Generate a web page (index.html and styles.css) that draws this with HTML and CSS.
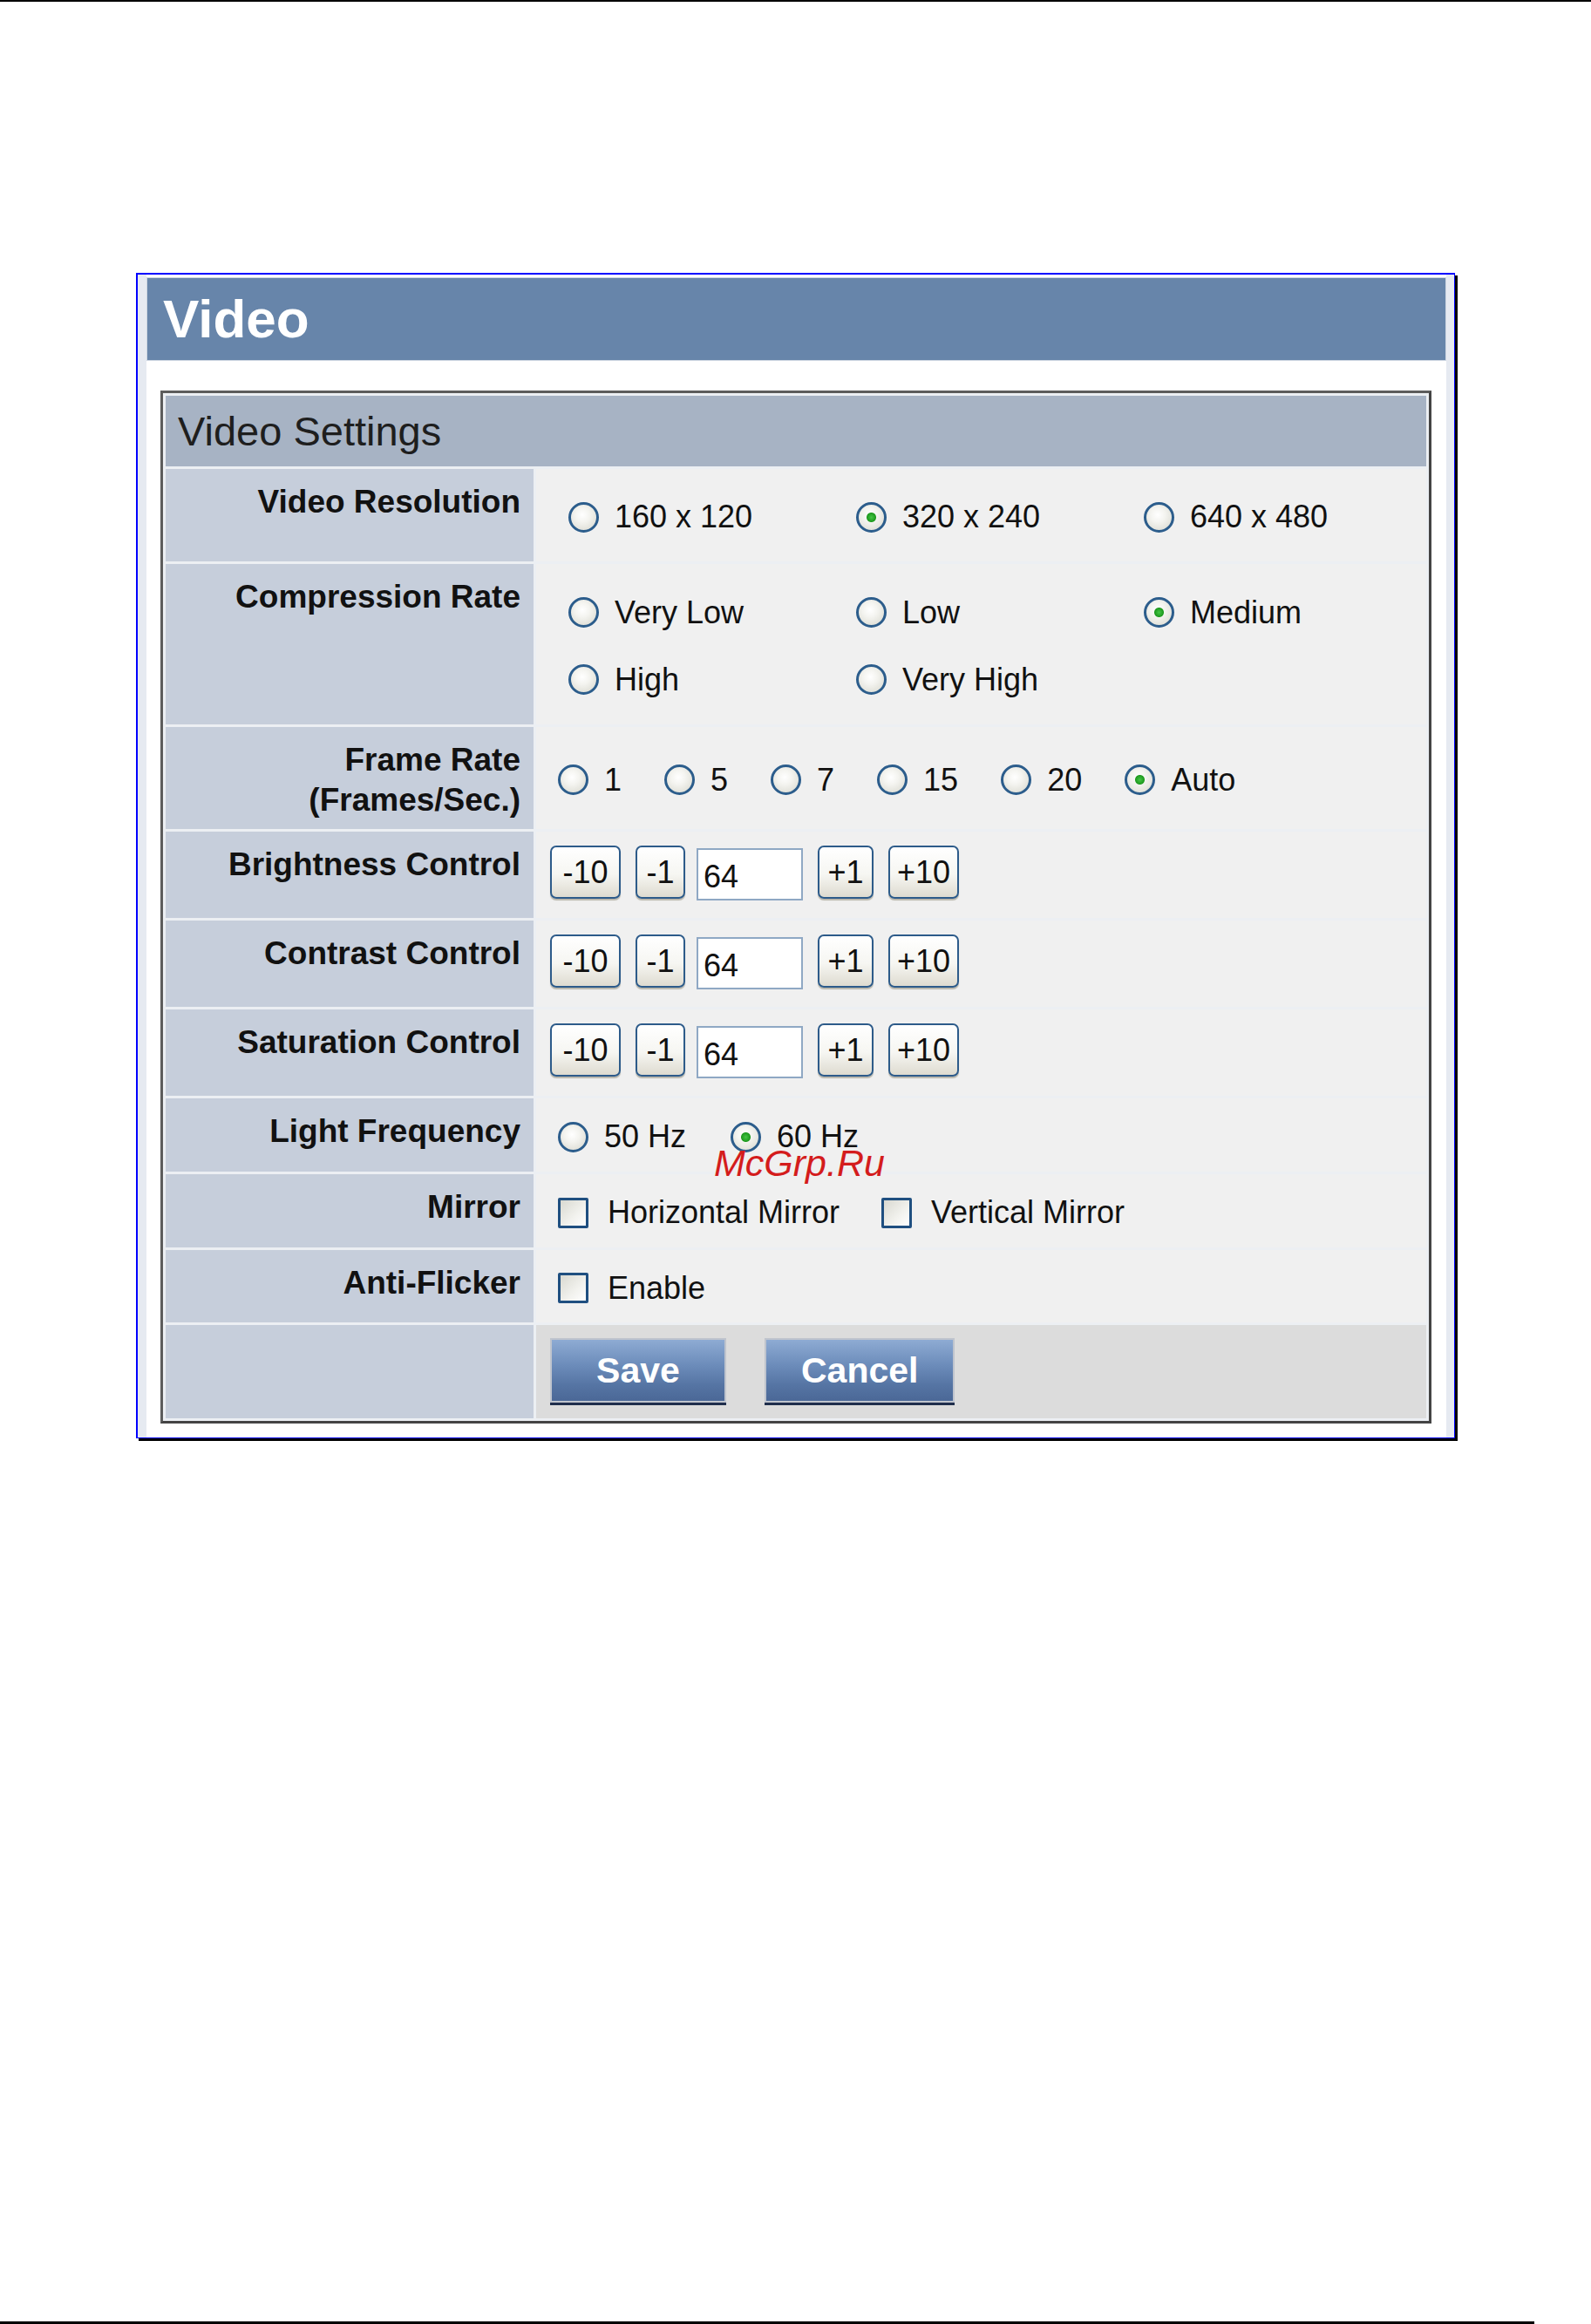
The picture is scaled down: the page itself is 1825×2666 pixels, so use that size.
FILE: index.html
```html
<!DOCTYPE html>
<html>
<head>
  <title>Video</title>
  <link rel="stylesheet" href="styles.css">
</head>
<body>
<div class="topline"></div>

<div class="panel">
  <h1 class="title">Video</h1>

  <table class="settings">
    <colgroup>
      <col class="c-lbl">
      <col class="c-val">
    </colgroup>
    <tr class="r-head">
      <td colspan="2" class="sec">Video Settings</td>
    </tr>
    <tr class="r-res">
      <td class="lbl">Video Resolution</td>
      <td class="val">
        <div class="cols">
          <label class="opt"><input type="radio" name="res"> 160 x 120</label>
          <label class="opt"><input type="radio" name="res" checked> 320 x 240</label>
          <label class="opt"><input type="radio" name="res"> 640 x 480</label>
        </div>
      </td>
    </tr>
    <tr class="r-comp">
      <td class="lbl">Compression Rate</td>
      <td class="val">
        <div class="cols">
          <label class="opt"><input type="radio" name="comp"> Very Low</label>
          <label class="opt"><input type="radio" name="comp"> Low</label>
          <label class="opt"><input type="radio" name="comp" checked> Medium</label>
          <label class="opt"><input type="radio" name="comp"> High</label>
          <label class="opt"><input type="radio" name="comp"> Very High</label>
        </div>
      </td>
    </tr>
    <tr class="r-fps">
      <td class="lbl">Frame Rate<br>(Frames/Sec.)</td>
      <td class="val">
        <div class="line">
          <label class="opt fps"><input type="radio" name="fps"> 1</label>
          <label class="opt fps"><input type="radio" name="fps"> 5</label>
          <label class="opt fps"><input type="radio" name="fps"> 7</label>
          <label class="opt fps"><input type="radio" name="fps"> 15</label>
          <label class="opt fps"><input type="radio" name="fps"> 20</label>
          <label class="opt fps"><input type="radio" name="fps" checked> Auto</label>
        </div>
      </td>
    </tr>
    <tr class="r-ctl">
      <td class="lbl">Brightness Control</td>
      <td class="val ctl">
        <div class="stepper">
          <button class="step s10">-10</button>
          <button class="step s1">-1</button>
          <input class="num" type="text" value="64">
          <button class="step s1p">+1</button>
          <button class="step s10">+10</button>
        </div>
      </td>
    </tr>
    <tr class="r-ctl">
      <td class="lbl">Contrast Control</td>
      <td class="val ctl">
        <div class="stepper">
          <button class="step s10">-10</button>
          <button class="step s1">-1</button>
          <input class="num" type="text" value="64">
          <button class="step s1p">+1</button>
          <button class="step s10">+10</button>
        </div>
      </td>
    </tr>
    <tr class="r-ctl">
      <td class="lbl">Saturation Control</td>
      <td class="val ctl">
        <div class="stepper">
          <button class="step s10">-10</button>
          <button class="step s1">-1</button>
          <input class="num" type="text" value="64">
          <button class="step s1p">+1</button>
          <button class="step s10">+10</button>
        </div>
      </td>
    </tr>
    <tr class="r-sm">
      <td class="lbl">Light Frequency</td>
      <td class="val">
        <div class="line">
          <label class="opt hz"><input type="radio" name="hz"> 50 Hz</label>
          <label class="opt hz"><input type="radio" name="hz" checked> 60 Hz</label>
        </div>
      </td>
    </tr>
    <tr class="r-sm">
      <td class="lbl">Mirror</td>
      <td class="val">
        <div class="line">
          <label class="opt box"><input type="checkbox"> Horizontal Mirror</label>
          <label class="opt box"><input type="checkbox"> Vertical Mirror</label>
        </div>
      </td>
    </tr>
    <tr class="r-sm2">
      <td class="lbl">Anti-Flicker</td>
      <td class="val">
        <div class="line">
          <label class="opt box"><input type="checkbox"> Enable</label>
        </div>
      </td>
    </tr>
    <tr class="r-btn">
      <td class="lbl"></td>
      <td class="val actions">
        <button class="big">Save</button>
        <button class="big cancel">Cancel</button>
      </td>
    </tr>
  </table>
</div>

<div class="mark">McGrp.Ru</div>

<div class="bottomline"></div>
</body>
</html>
```

FILE: styles.css
```css
body {
  margin: 0;
  height: 2666px;
  display: flex;
  flex-direction: column;
  position: relative;
  font-family: "Liberation Sans", Arial, sans-serif;
  color: #111;
  background: #fff;
}
.topline {
  height: 2px;
  background: #000;
}
.bottomline {
  margin-top: auto;
  height: 3px;
  width: 1760px;
  background: #000;
}

/* outer frame */
.panel {
  margin: 311px 0 0 156px;
  width: 1491px;
  padding: 3px 9px 16px 10px;
  border: 1px solid #0000ff;
  border-top-width: 2px;
  border-left-width: 2px;
  box-shadow: 3px 3px 0 #000;
  background: linear-gradient(to right, #e6eaf1 0, #e6eaf1 10px, #fff 10px, #fff calc(100% - 9px), #e6eaf1 calc(100% - 9px));
}
.title {
  margin: 0;
  height: 96px;
  box-sizing: border-box;
  padding-left: 18px;
  line-height: 94px;
  font-size: 62px;
  font-weight: bold;
  color: #fff;
  background: #6785aa;
  border: 1px solid #cfd7e2;
}

/* settings table */
.settings {
  margin: 34px 0 0 16px;
  width: 1458px;
  table-layout: fixed;
  border-collapse: separate;
  border-spacing: 3px;
  border: 3px solid #5c5c5c;
  border-right-color: #444;
  border-bottom-color: #444;
  background: #eceff3;
}
.c-lbl { width: 422px; }
.c-val { width: 1021px; }
.settings td {
  padding: 0;
}
.sec {
  background: #a7b3c4;
  font-size: 47px;
  color: #1e1e1e;
  padding-left: 14px !important;
  vertical-align: middle;
}
.lbl {
  background: #c6cedb;
  text-align: right;
  vertical-align: top;
  padding: 15px 15px 0 0 !important;
  font-weight: bold;
  font-size: 37px;
  line-height: 46px;
  color: #111;
}
.val {
  background: #f0f0f0;
  vertical-align: middle;
  padding: 4px 0 0 16px !important;
  font-size: 36px;
}
.val.ctl {
  padding-top: 0 !important;
}

.r-head { height: 81px; }
.r-res { height: 106px; }
.r-comp { height: 184px; }
.r-fps { height: 117px; }
.r-ctl { height: 99px; }
.r-sm { height: 84px; }
.r-sm2 { height: 83px; }
.r-btn { height: 107px; }

/* radio / checkbox options */
.cols {
  display: grid;
  grid-template-columns: repeat(3, 330px);
  grid-auto-rows: 46px;
  row-gap: 31px;
  padding-left: 21px;
}
.line {
  display: flex;
  align-items: center;
  padding-left: 9px;
}
.opt {
  display: inline-flex;
  align-items: center;
  font-size: 36px;
  line-height: 46px;
  color: #111;
}
.opt input {
  -webkit-appearance: none;
  appearance: none;
  margin: 0 18px 0 0;
  width: 35px;
  height: 35px;
  box-sizing: border-box;
  border: 3px solid #2c5d8c;
  flex: none;
}
.opt input[type="radio"] {
  border-radius: 50%;
  background: radial-gradient(circle at 45% 40%, #ffffff 0, #f4f4f0 35%, #d6d6cc 100%);
}
.opt input[type="radio"]:checked {
  background: radial-gradient(circle, #45c645 0, #1e9a1e 5px, transparent 6px),
              radial-gradient(circle at 45% 40%, #ffffff 0, #f4f4f0 35%, #d6d6cc 100%);
}
.opt input[type="checkbox"] {
  border-radius: 2px;
  border-color: #1f4f80;
  background: linear-gradient(135deg, #d9d9d1 0, #f2f2ee 60%, #ffffff 100%);
}
.fps { margin-right: 49px; }
.hz { margin-right: 51px; }
.box { margin-right: 48px; }
.box input { margin-right: 22px; }

/* stepper controls */
.stepper {
  display: flex;
  align-items: center;
  gap: 17px;
  margin-bottom: 6px;
}
.step {
  height: 61px;
  padding: 0;
  font-family: "Liberation Sans", Arial, sans-serif;
  font-size: 36px;
  color: #111;
  border: 2px solid #2d5b8a;
  border-radius: 7px;
  background: linear-gradient(#ffffff 0, #f6f6f2 55%, #dedbd0 100%);
  box-shadow: 0 2px 1px #b9b6ab;
}
.s10 { width: 81px; }
.s1 { width: 57px; }
.s1p { width: 64px; }
.num {
  width: 122px;
  height: 60px;
  box-sizing: border-box;
  margin: 4px 0 0 -4px;
  padding: 6px 0 0 6px;
  border: 2px solid #8fa8c4;
  background: #fff;
  font-family: "Liberation Sans", Arial, sans-serif;
  font-size: 36px;
  color: #111;
}

/* save / cancel */
.actions {
  background: #dcdcdc;
  padding-top: 0 !important;
}
.big {
  min-width: 202px;
  height: 74px;
  margin: 0 34px 3px 0;
  padding: 0 43px;
  font-family: "Liberation Sans", Arial, sans-serif;
  font-size: 41px;
  font-weight: bold;
  color: #fff;
  border: 2px solid #bfc4cd;
  background: linear-gradient(#8eabd3 0, #6d8dbb 40%, #5574a3 75%, #4b6897 100%);
  box-shadow: 0 3px 0 #1f2e4c;
}
.cancel {
  padding: 0 40px;
}

/* watermark over the page */
.mark {
  position: absolute;
  left: 819px;
  top: 1309px;
  font-size: 43px;
  line-height: 50px;
  font-style: italic;
  color: #d41c1c;
}
```
